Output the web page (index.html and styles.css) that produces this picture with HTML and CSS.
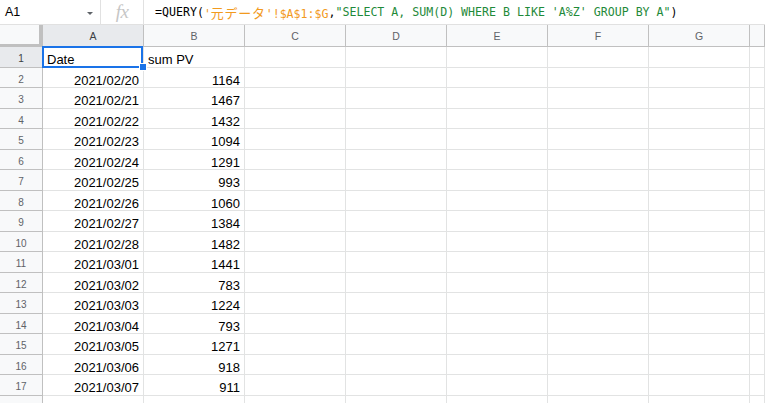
FILE: index.html
```html
<!DOCTYPE html>
<html>
<head>
<meta charset="utf-8">
<link rel="stylesheet" href="styles.css">
</head>
<body>
<div class="fbar">
  <div class="namebox"><span class="ref">A1</span><span class="caret"></span></div>
  <div class="fx">fx</div>
  <div class="formula"><span>=QUERY(</span><span class="f-ref">'<span class="cjk">元データ</span>'!$A$1:$G</span><span>,</span><span class="f-str">"SELECT A, SUM(D) WHERE B LIKE 'A%Z' GROUP BY A"</span><span>)</span></div>
</div>
<div class="sheet">
  <div class="corner"></div>
  <div class="ch sel">A</div><div class="ch">B</div><div class="ch">C</div><div class="ch">D</div><div class="ch">E</div><div class="ch">F</div><div class="ch">G</div><div class="ch"></div>

  <div class="rh sel">1</div><div class="c a1">Date</div><div class="c">sum PV</div><div class="c"></div><div class="c"></div><div class="c"></div><div class="c"></div><div class="c"></div><div class="c"></div>
  <div class="rh">2</div><div class="c n">2021/02/20</div><div class="c n">1164</div><div class="c"></div><div class="c"></div><div class="c"></div><div class="c"></div><div class="c"></div><div class="c"></div>
  <div class="rh">3</div><div class="c n">2021/02/21</div><div class="c n">1467</div><div class="c"></div><div class="c"></div><div class="c"></div><div class="c"></div><div class="c"></div><div class="c"></div>
  <div class="rh">4</div><div class="c n">2021/02/22</div><div class="c n">1432</div><div class="c"></div><div class="c"></div><div class="c"></div><div class="c"></div><div class="c"></div><div class="c"></div>
  <div class="rh">5</div><div class="c n">2021/02/23</div><div class="c n">1094</div><div class="c"></div><div class="c"></div><div class="c"></div><div class="c"></div><div class="c"></div><div class="c"></div>
  <div class="rh">6</div><div class="c n">2021/02/24</div><div class="c n">1291</div><div class="c"></div><div class="c"></div><div class="c"></div><div class="c"></div><div class="c"></div><div class="c"></div>
  <div class="rh">7</div><div class="c n">2021/02/25</div><div class="c n">993</div><div class="c"></div><div class="c"></div><div class="c"></div><div class="c"></div><div class="c"></div><div class="c"></div>
  <div class="rh">8</div><div class="c n">2021/02/26</div><div class="c n">1060</div><div class="c"></div><div class="c"></div><div class="c"></div><div class="c"></div><div class="c"></div><div class="c"></div>
  <div class="rh">9</div><div class="c n">2021/02/27</div><div class="c n">1384</div><div class="c"></div><div class="c"></div><div class="c"></div><div class="c"></div><div class="c"></div><div class="c"></div>
  <div class="rh">10</div><div class="c n">2021/02/28</div><div class="c n">1482</div><div class="c"></div><div class="c"></div><div class="c"></div><div class="c"></div><div class="c"></div><div class="c"></div>
  <div class="rh">11</div><div class="c n">2021/03/01</div><div class="c n">1441</div><div class="c"></div><div class="c"></div><div class="c"></div><div class="c"></div><div class="c"></div><div class="c"></div>
  <div class="rh">12</div><div class="c n">2021/03/02</div><div class="c n">783</div><div class="c"></div><div class="c"></div><div class="c"></div><div class="c"></div><div class="c"></div><div class="c"></div>
  <div class="rh">13</div><div class="c n">2021/03/03</div><div class="c n">1224</div><div class="c"></div><div class="c"></div><div class="c"></div><div class="c"></div><div class="c"></div><div class="c"></div>
  <div class="rh">14</div><div class="c n">2021/03/04</div><div class="c n">793</div><div class="c"></div><div class="c"></div><div class="c"></div><div class="c"></div><div class="c"></div><div class="c"></div>
  <div class="rh">15</div><div class="c n">2021/03/05</div><div class="c n">1271</div><div class="c"></div><div class="c"></div><div class="c"></div><div class="c"></div><div class="c"></div><div class="c"></div>
  <div class="rh">16</div><div class="c n">2021/03/06</div><div class="c n">918</div><div class="c"></div><div class="c"></div><div class="c"></div><div class="c"></div><div class="c"></div><div class="c"></div>
  <div class="rh">17</div><div class="c n">2021/03/07</div><div class="c n">911</div><div class="c"></div><div class="c"></div><div class="c"></div><div class="c"></div><div class="c"></div><div class="c"></div>
  <div class="rh"></div><div class="c"></div><div class="c"></div><div class="c"></div><div class="c"></div><div class="c"></div><div class="c"></div><div class="c"></div><div class="c"></div>
</div>
</body>
</html>
```

FILE: styles.css
```css
html, body {
  margin: 0;
  padding: 0;
  background: #ffffff;
  overflow: hidden;
  width: 765px;
  height: 403px;
}

body {
  font-family: "Liberation Sans", Arial, sans-serif;
  color: #000;
}

/* formula bar */
.fbar {
  display: flex;
  height: 24px;
  border-bottom: 1px solid #e1e1e1;
  background: #fff;
}

.namebox {
  position: relative;
  border-right: 1px solid #e1e1e1;
  display: flex;
  align-items: center;
  padding-left: 5px;
  box-sizing: content-box;
  width: 95px;
}

.ref {
  font-size: 12.5px;
  color: #000;
}

.caret {
  position: absolute;
  left: 87px;
  top: 12px;
  width: 0;
  height: 0;
  border-left: 3px solid transparent;
  border-right: 3px solid transparent;
  border-top: 3px solid #5f6368;
}

.fx {
  width: 42px;
  border-right: 1px solid #e1e1e1;
  display: flex;
  align-items: center;
  justify-content: center;
  font-family: "Liberation Serif", "Times New Roman", serif;
  font-style: italic;
  font-size: 19px;
  color: #c6c6c6;
  letter-spacing: -0.5px;
}

.formula {
  display: flex;
  align-items: center;
  padding-left: 11px;
  font-family: "DejaVu Sans Mono", "Liberation Mono", monospace;
  font-size: 11.6px;
  white-space: pre;
  color: #000;
}

.f-ref {
  color: #f29a1e;
}

.cjk {
  font-family: "Noto Sans CJK JP", sans-serif;
  font-size: 13px;
  letter-spacing: 0.7px;
}

.f-str {
  color: #1f8a3a;
}

/* sheet grid */
.sheet {
  display: grid;
  grid-template-columns: 43px repeat(7, 101px) 1fr;
  grid-template-rows: 22px;
  grid-auto-rows: 20.5px;
  overflow: hidden;
}

.sheet > div {
  box-sizing: border-box;
  min-width: 0;
}

.corner {
  background: #f8f9fa;
  border-right: 4px solid #c0c0c0;
  border-bottom: 3px solid #c0c0c0;
}

.ch {
  background: #f8f9fa;
  border-right: 1px solid #c0c0c0;
  border-bottom: 1px solid #c0c0c0;
  text-align: center;
  font-size: 10.5px;
  line-height: 21px;
  padding-top: 1px;
  color: #5f6368;
}

.rh {
  background: #f8f9fa;
  border-right: 1px solid #c0c0c0;
  border-bottom: 1px solid #c0c0c0;
  text-align: center;
  font-size: 10px;
  line-height: 20px;
  padding-top: 2px;
  color: #5f6368;
}

.sel {
  background: #e8eaed;
  color: #3c4043;
}

.c {
  border-right: 1px solid #e2e3e3;
  border-bottom: 1px solid #e2e3e3;
  font-size: 13px;
  line-height: 16px;
  padding: 5px 4px 0 4px;
  white-space: nowrap;
}

.n {
  text-align: right;
}

.a1 {
  position: relative;
}

.a1::before {
  content: "";
  position: absolute;
  top: -1px;
  left: -1px;
  right: 0;
  bottom: -1px;
  border: 2px solid #1a73e8;
  z-index: 2;
}

.a1::after {
  content: "";
  position: absolute;
  right: -4px;
  bottom: -4px;
  width: 6px;
  height: 6px;
  background: #1a73e8;
  border: 1px solid #fff;
  z-index: 3;
}
```
